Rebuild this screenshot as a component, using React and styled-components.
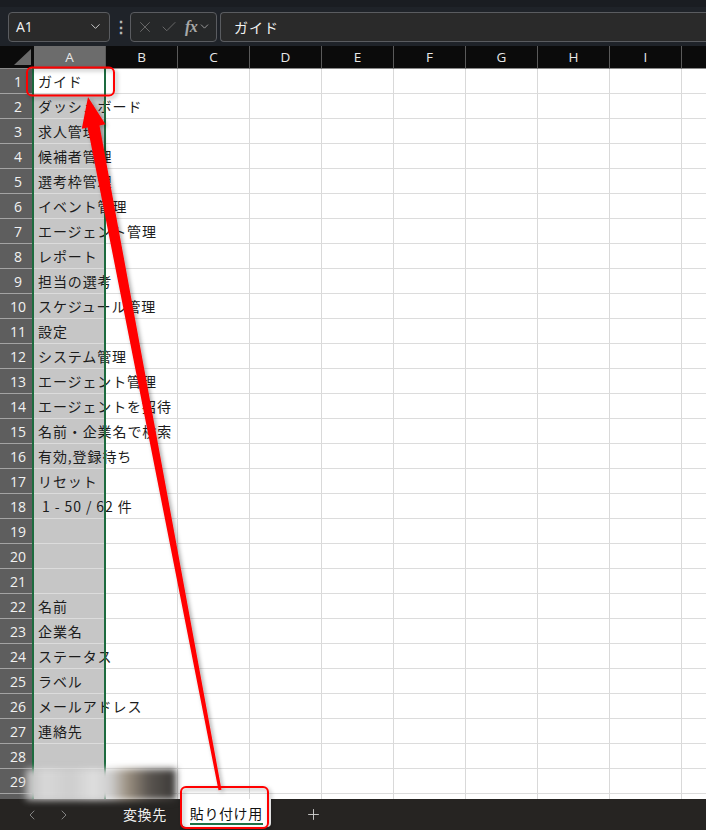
import React from "react";
import styled, { createGlobalStyle } from "styled-components";
import { ChevronDown, ChevronLeft, ChevronRight, X, Check, Plus } from "lucide-react";

const Global = createGlobalStyle`
  html, body { margin: 0; padding: 0; overflow: hidden; background: #1f2329; }
  * { box-sizing: border-box; }
`;

const JP = `"Noto Sans CJK JP", "Noto Sans", sans-serif`;
const UI = `"Open Sans", "Noto Sans", "Noto Sans CJK JP", sans-serif`;

const Page = styled.div`
  position: relative;
  width: 706px;
  height: 830px;
  display: flex;
  flex-direction: column;
  overflow: hidden;
  background: #1f2329;
`;

const TopBar = styled.div`
  height: 46px;
  flex: none;
  display: flex;
  align-items: center;
  gap: 3px;
  padding: 0 0 0 8px;
  background: #1f2329;
  border-top: 7px solid #1a1d22;
`;

const Field = styled.div`
  height: 30px;
  display: flex;
  align-items: center;
  border: 1px solid #5a5c60;
  border-radius: 4px;
  background: ${(p) => p.$bg || "#2a2a2a"};
  color: #f2f2f2;
  font-family: ${UI};
  font-size: 14px;
`;

const NameBox = styled(Field)`
  width: 102px;
  padding: 0 6px 0 7px;
  justify-content: space-between;
`;

const Kebab = styled.div`
  width: 14px;
  color: #b8b8b8;
  font-family: ${UI};
  font-size: 16px;
  font-weight: 700;
  text-align: center;
  line-height: 1;
`;

const ButtonGroup = styled(Field)`
  width: 87px;
  padding: 0 3px 0 5px;
  gap: 6px;
  color: #6e6e6e;
`;

const Fx = styled.span`
  font-family: "Liberation Serif", "DejaVu Serif", serif;
  font-style: italic;
  font-weight: 700;
  font-size: 16px;
  color: #a8a8a8;
  margin-left: 1px;
  letter-spacing: -0.5px;
`;

const FormulaInput = styled(Field)`
  flex: 1;
  padding-left: 13px;
  border-right: none;
  border-radius: 4px 0 0 4px;
  font-family: ${JP};
  letter-spacing: 1px;
`;

const Sheet = styled.div`
  flex: 1;
  overflow: hidden;
  background: #ffffff;
`;

const Grid = styled.div`
  display: grid;
  grid-template-columns: 34px repeat(10, 72px);
  grid-template-rows: 23px;
  grid-auto-rows: 25px;
`;

const Corner = styled.div`
  position: relative;
  background: #0b0b0b;
  border-bottom: 1px solid #8a8a8a;
  &::after {
    content: "";
    position: absolute;
    right: 3px;
    bottom: 3px;
    width: 0;
    height: 0;
    border-style: solid;
    border-width: 0 0 16px 17px;
    border-color: transparent transparent #6a6a6a transparent;
  }
`;

const ColHead = styled.div`
  display: flex;
  align-items: center;
  justify-content: center;
  background: ${(p) => (p.$sel ? "#6c6c6c" : "#0b0b0b")};
  border-right: 1px solid #5a5a5a;
  border-bottom: 1px solid #8a8a8a;
  color: #e8e8e8;
  font-family: ${UI};
  font-size: 13.5px;
`;

const RowHead = styled.div`
  display: flex;
  align-items: center;
  justify-content: center;
  padding-left: 2px;
  background: #5e5e5e;
  border-bottom: 1px solid #a3a3a3;
  color: #f2f2f2;
  font-family: ${UI};
  font-size: 14px;
`;

const Cell = styled.div`
  position: relative;
  display: flex;
  align-items: center;
  padding-left: 4px;
  background: ${(p) => (p.$active ? "#ffffff" : p.$sel ? "#c6c6c6" : "#ffffff")};
  border-right: 1px solid ${(p) => (p.$sel ? "transparent" : "#d9d9d9")};
  border-bottom: 1px solid #dcdcdc;
  &::after {
    content: ${(p) => (p.$sel ? '""' : "none")};
    position: absolute;
    top: -1px;
    bottom: -1px;
    left: -2px;
    right: -1px;
    border-left: 2px solid #1d6b3f;
    border-right: 2px solid #1d6b3f;
    z-index: 3;
    pointer-events: none;
  }
`;

const CellText = styled.span`
  position: relative;
  z-index: 2;
  white-space: pre;
  color: #1c1c1c;
  font-family: ${JP};
  font-size: 14px;
  letter-spacing: 0.9px;
  line-height: 1;
`;

const TabBar = styled.div`
  height: 31px;
  flex: none;
  display: flex;
  align-items: center;
  background: #262422;
  font-family: ${JP};
  font-size: 14px;
`;

const NavBtn = styled.div`
  width: 32px;
  display: flex;
  justify-content: center;
  color: #8a8a8a;
  margin-left: ${(p) => p.$ml || 0}px;
`;

const Tab = styled.div`
  flex: none;
  height: ${(p) => (p.$active ? "28px" : "auto")};
  align-self: ${(p) => (p.$active ? "flex-start" : "center")};
  display: flex;
  align-items: center;
  justify-content: center;
  white-space: nowrap;
  padding: ${(p) => (p.$active ? "0 8px" : "0")};
  margin-left: ${(p) => p.$ml || 0}px;
  background: ${(p) => (p.$active ? "#ffffff" : "transparent")};
  border-radius: 0 0 4px 4px;
  color: ${(p) => (p.$active ? "#111" : "#f0f0f0")};
  letter-spacing: 0.6px;
`;

const TabLabel = styled.span`
  padding-bottom: 1px;
  border-bottom: ${(p) => (p.$active ? "2.5px solid #1e7145" : "none")};
  line-height: 18px;
  margin-top: ${(p) => (p.$active ? "3px" : "0")};
`;

const AddTab = styled.div`
  margin-left: 34px;
  color: #d0d0d0;
  display: flex;
`;

const Blur = styled.div`
  position: absolute;
  left: 26px;
  top: 769px;
  width: 150px;
  height: 31px;
  background: linear-gradient(
    90deg,
    #bdbdbd 0%,
    #d8d8d8 12%,
    #cdcdcd 30%,
    #dedede 45%,
    #cfcfcf 56%,
    #9a8f80 68%,
    #5a5550 82%,
    #3a3836 100%
  );
  filter: blur(3.5px);
  z-index: 5;
`;

const Overlay = styled.svg`
  position: absolute;
  left: 0;
  top: 0;
  width: 706px;
  height: 830px;
  pointer-events: none;
  z-index: 10;
`;

const cols = ["A", "B", "C", "D", "E", "F", "G", "H", "I", ""];
const texts = [
  "ガイド",
  "ダッシュボード",
  "求人管理",
  "候補者管理",
  "選考枠管理",
  "イベント管理",
  "エージェント管理",
  "レポート",
  "担当の選考",
  "スケジュール管理",
  "設定",
  "システム管理",
  "エージェント管理",
  "エージェントを招待",
  "名前・企業名で検索",
  "有効,登録待ち",
  "リセット",
  " 1 - 50 / 62 件",
  "",
  "",
  "",
  "名前",
  "企業名",
  "ステータス",
  "ラベル",
  "メールアドレス",
  "連絡先",
  "",
  "",
  "",
];

export default function App() {
  return (
    <Page>
      <Global />
      <TopBar>
        <NameBox>
          <span>A1</span>
          <ChevronDown size={15} color="#c8c8c8" strokeWidth={1.6} />
        </NameBox>
        <Kebab>⋮</Kebab>
        <ButtonGroup $bg="#262829">
          <X size={18} strokeWidth={1.2} />
          <Check size={18} strokeWidth={1.2} />
          <Fx>fx</Fx>
          <ChevronDown size={13} color="#a8a8a8" strokeWidth={1.6} style={{ marginLeft: -5 }} />
        </ButtonGroup>
        <FormulaInput>ガイド</FormulaInput>
      </TopBar>
      <Sheet>
        <Grid>
          <Corner />
          {cols.map((c, i) => (
            <ColHead key={i} $sel={i === 0}>
              {c}
            </ColHead>
          ))}
          {texts.map((t, r) => (
            <React.Fragment key={r}>
              <RowHead>{r < 29 ? r + 1 : ""}</RowHead>
              {cols.map((c, i) => (
                <Cell key={i} $sel={i === 0} $active={i === 0 && r === 0}>
                  {i === 0 && t ? <CellText>{t}</CellText> : null}
                </Cell>
              ))}
            </React.Fragment>
          ))}
        </Grid>
      </Sheet>
      <TabBar>
        <NavBtn $ml={16}>
          <ChevronLeft size={16} strokeWidth={1.4} />
        </NavBtn>
        <NavBtn>
          <ChevronRight size={16} strokeWidth={1.4} />
        </NavBtn>
        <Tab $ml={43}>
          <TabLabel>変換先</TabLabel>
        </Tab>
        <Tab $active $ml={15}>
          <TabLabel $active>貼り付け用</TabLabel>
        </Tab>
        <AddTab>
          <Plus size={17} strokeWidth={1.3} />
        </AddTab>
      </TabBar>
      <Blur />
      <Overlay viewBox="0 0 706 830">
        <defs>
          <filter id="sh" x="-20%" y="-20%" width="140%" height="140%">
            <feDropShadow dx="2" dy="2" stdDeviation="2" floodColor="#000" floodOpacity="0.35" />
          </filter>
        </defs>
        <g filter="url(#sh)">
          <rect x="27" y="67.5" width="87" height="28" rx="5" fill="none" stroke="#ff0000" strokeWidth="2" />
          <rect x="181" y="787" width="87" height="41" rx="5" fill="none" stroke="#ff0000" strokeWidth="2" />
          <polygon
            points="88,97 105.4,124.3 99.5,125.4 221.5,789.7 218.5,790.3 87.7,127.6 81.8,128.7"
            fill="#ff0000"
          />
        </g>
      </Overlay>
    </Page>
  );
}
